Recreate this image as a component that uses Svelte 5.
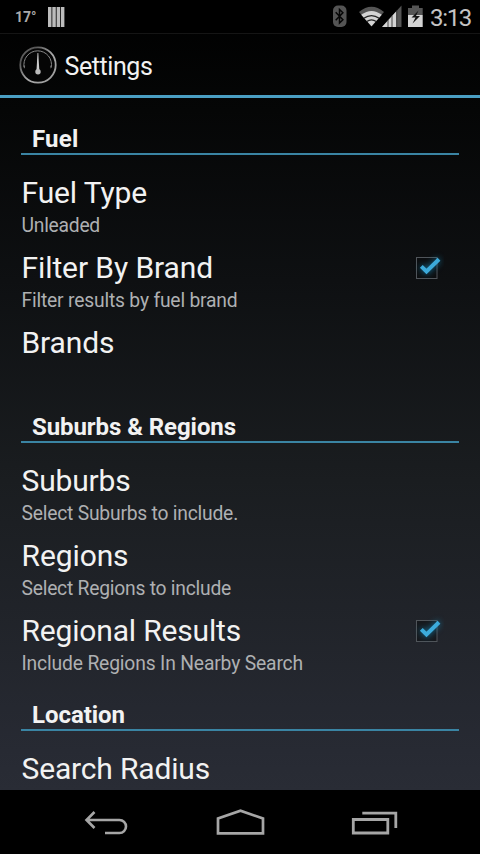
<script>
    let sections = [
        {
            title: "Fuel",
            width: 44.5,
            items: [
                { title: "Fuel Type", width: 123.5, summary: "Unleaded", summaryWidth: 76.5 },
                { title: "Filter By Brand", width: 189.5, summary: "Filter results by fuel brand", summaryWidth: 214, checkbox: true, checked: true },
                { title: "Brands", width: 91 }
            ]
        },
        {
            title: "Suburbs & Regions",
            width: 202,
            items: [
                { title: "Suburbs", width: 107, summary: "Select Suburbs to include.", summaryWidth: 214.5 },
                { title: "Regions", width: 105, summary: "Select Regions to include", summaryWidth: 207.5 },
                { title: "Regional Results", width: 217.5, summary: "Include Regions In Nearby Search", summaryWidth: 279.5, checkbox: true, checked: true }
            ]
        },
        {
            title: "Location",
            width: 91,
            items: [
                { title: "Search Radius", width: 186.5 }
            ]
        }
    ]

    // spreads a label over its nominal width
    function fit(node, width){
        const range = document.createRange()
        range.selectNodeContents(node)
        const natural = range.getBoundingClientRect().width
        node.style.letterSpacing = (width + 2 - natural) / node.textContent.length + "px"
    }
</script>

<div class="screen">
    <div class="status-bar">
        <span class="temperature">17°</span>
        <svg class="bars" width="17" height="20" viewBox="0 0 17 20">
            <path d="M0 0h3.5v20h-3.5zM4.3 0h3.5v20h-3.5zM8.6 0h3.5v20h-3.5zM12.9 0h3.5v20h-3.5z" fill="#bcbcbc"/>
        </svg>
        <svg class="system" width="104" height="34" viewBox="0 0 104 34">
            <rect x="1" y="5.5" width="13.5" height="21.5" rx="5" fill="#545454"/>
            <path d="M3.7 12.2l7.2 7.6-3.4 3.2V9.5l3.4 3.2-7.2 7.6" fill="none" stroke="#050505" stroke-width="1.5"/>
            <path d="M27 12Q39.5 1.5 52 12L39.5 26.5Z" fill="#555"/>
            <path d="M29.2 14.8Q39.5 7 49.8 14.8L39.5 26.3Z" fill="#d4d4d4"/>
            <path d="M31.8 18.3Q39.5 12.8 47.2 18.3M34.7 21.6Q39.5 18 44.3 21.6" fill="none" stroke="#222" stroke-width="1.2"/>
            <path d="M50 27L69.5 5.5V27Z" fill="#555"/>
            <path d="M50 27L64.5 11V27Z" fill="#d4d4d4"/>
            <path d="M56 20v7M60 15.5v11.5M64.7 10v17" stroke="#222" stroke-width="0.8"/>
            <path d="M76 8h4V5.5h7V8h3.7v7H76z" fill="#555"/>
            <path d="M76 15h14.7v12H76z" fill="#d4d4d4"/>
            <path d="M86.5 10.5l-7 7h4l-3 6 7.5-7.5h-4z" fill="#151515"/>
        </svg>
        <span class="clock" use:fit={39}>3:13</span>
    </div>

    <header class="action-bar">
        <svg width="40" height="40" viewBox="0 0 40 40">
            <defs>
                <linearGradient id="rim" x1="0" y1="0" x2="1" y2="1">
                    <stop offset="0" stop-color="#777"/>
                    <stop offset="0.2" stop-color="#555"/>
                    <stop offset="0.55" stop-color="#aaa"/>
                    <stop offset="1" stop-color="#999"/>
                </linearGradient>
            </defs>
            <circle cx="20" cy="20" r="17.7" fill="#050505" stroke="url(#rim)" stroke-width="1.8"/>
            <path d="M6.2 22.5A13.8 13.8 0 1 1 33.2 22.5" fill="none" stroke="#888" stroke-width="1"/>
            <path d="M5.2 20.5l2 .3-.6 3zM34.2 20.5l-2 .3.6 3z" fill="#777"/>
            <path d="M19.5 8h.8l1 17h-2.8z" fill="#ccc"/>
            <circle cx="20" cy="26.7" r="2.7" fill="#bbb"/>
        </svg>
        <h1 use:fit={86}>Settings</h1>
    </header>

    <main>
        {#each sections as section}
            <section>
                <h2><span use:fit={section.width}>{section.title}</span></h2>
                {#each section.items as item}
                    <div class="row">
                        <div class="labels">
                            <div class="title"><span use:fit={item.width}>{item.title}</span></div>
                            {#if item.summary}
                                <div class="summary"><span use:fit={item.summaryWidth}>{item.summary}</span></div>
                            {/if}
                        </div>
                        {#if item.checkbox}
                            <svg class="checkbox" width="34" height="34" viewBox="0 0 34 34">
                                <rect x="6.5" y="7.5" width="20.5" height="21" fill="#0b0e10" fill-opacity="0.5" stroke="#50555a"/>
                                {#if item.checked}
                                    <path class="tick" d="M11.3 16.3l5.2 5.2L29 9.2" fill="none" stroke="#3cabdb" stroke-width="4"/>
                                {/if}
                            </svg>
                        {/if}
                    </div>
                {/each}
            </section>
        {/each}
    </main>

    <nav>
        <svg width="48" height="32" viewBox="0 0 48 32">
            <path d="M11.5 3L3.5 11l8 8M3.5 11h33a6.5 6.5 0 0 1 0 13H22" fill="none" stroke="#a6a6a6" stroke-width="2.6"/>
        </svg>
        <svg width="52" height="32" viewBox="0 0 52 32">
            <path d="M3 24.3V9.5L25.5 1.8 48 9.5V24.3Z" fill="none" stroke="#a6a6a6" stroke-width="2.7"/>
        </svg>
        <svg width="48" height="32" viewBox="0 0 48 32">
            <path d="M3.3 10.5h34.5v13.5H3.3zM12.3 4.2h33.5v14.8" fill="none" stroke="#a6a6a6" stroke-width="2.8"/>
        </svg>
    </nav>
</div>

<style>
    :global(body) {
        margin: 0;
        background: #000;
    }

    .screen {
        display: flex;
        flex-direction: column;
        width: 480px;
        height: 854px;
        overflow: hidden;
        font-family: Roboto, "Noto Sans", sans-serif;
        color: #f2f2f2;
        white-space: nowrap;
        background: linear-gradient(#000 0, #050606 110px, #0e1012 280px, #1a1d20 480px, #272a33 750px, #292c35 790px);
    }

    .status-bar {
        display: flex;
        flex: none;
        height: 34px;
        box-sizing: border-box;
        padding-left: 15px;
        background: #000;
        border-bottom: 1px solid #151515;
    }

    .temperature {
        width: 33px;
        font-size: 14px;
        font-weight: bold;
        line-height: 34px;
        color: #aaa;
    }

    .bars {
        margin-top: 7px;
    }

    .system {
        flex: none;
        margin-left: 267px;
    }

    .clock {
        margin-left: -6px;
        font-size: 24px;
        line-height: 36px;
        color: #c4c4c4;
    }

    .action-bar {
        display: flex;
        flex: none;
        align-items: center;
        height: 64px;
        box-sizing: border-box;
        padding-left: 18px;
        border-bottom: 3px solid #4a9fc4;
    }

    h1 {
        margin: 3px 0 0 6.5px;
        font-size: 25px;
        font-weight: normal;
    }

    main {
        flex: 1;
        min-height: 0;
        overflow: hidden;
        padding: 2px 21px 0;
    }

    h2 {
        height: 55px;
        box-sizing: border-box;
        margin: 0 0 8px;
        padding: 24px 0 0 11px;
        font-size: 24px;
        font-weight: bold;
        line-height: 30px;
        border-bottom: 2px solid #3a84a3;
    }

    .row {
        display: flex;
        justify-content: space-between;
        height: 75px;
        box-sizing: border-box;
        padding: 12px 0 0 0.5px;
    }

    .title {
        font-size: 30px;
        line-height: 36px;
    }

    .summary {
        margin-top: 3px;
        font-size: 19.3px;
        line-height: 23px;
        color: #aeb0b2;
    }

    .checkbox {
        margin-right: 15px;
    }

    .tick {
        filter: drop-shadow(0 0 3px #147aa5);
    }

    nav {
        display: flex;
        flex: none;
        justify-content: space-between;
        align-items: center;
        height: 64px;
        box-sizing: border-box;
        padding: 5px 82px 0 83px;
        background: #000;
    }
</style>
